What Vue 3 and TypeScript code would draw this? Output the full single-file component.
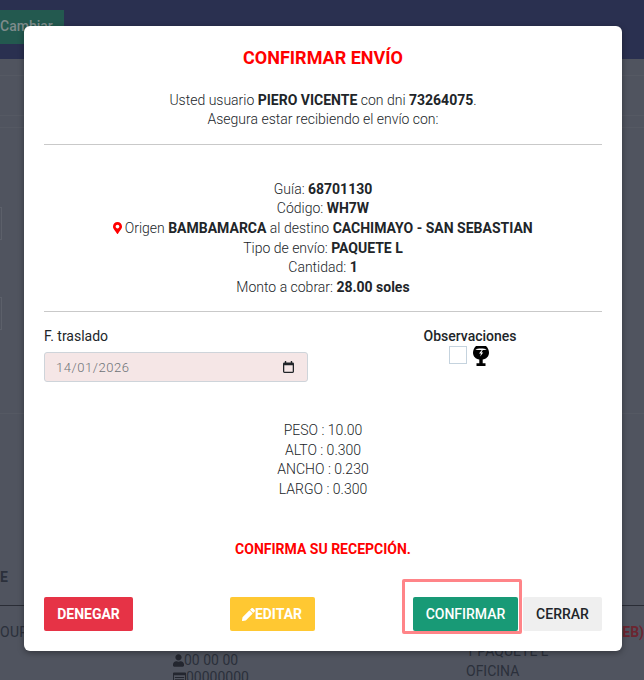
<script setup lang="ts">
const shipment = [
  { label: 'Guía:', value: '68701130' },
  { label: 'Código:', value: 'WH7W' },
];
const details = [
  { label: 'Tipo de envío:', value: 'PAQUETE L' },
  { label: 'Cantidad:', value: '1' },
  { label: 'Monto a cobrar:', value: '28.00 soles' },
];
const sizes = ['PESO : 10.00', 'ALTO : 0.300', 'ANCHO : 0.230', 'LARGO : 0.300'];
</script>

<template>
  <div class="page">
    <header class="topbar"><span class="change">Cambiar</span></header>
    <main class="behind">
      <div class="ghost-lines">
        <span class="ghost-line l1"></span>
        <span class="ghost-line l2"></span>
        <span class="ghost-line l3"></span>
      </div>
      <div class="ghost-input first"></div>
      <div class="ghost-input second"></div>
      <div class="ghost-line l4"></div>
      <div class="ghost-head">E</div>
      <div class="ghost-row">
        <span class="ghost-a">OUR</span>
        <div class="ghost-b">
          <span class="ghost-icon">
            <svg viewBox="0 0 448 512" width="11" height="13"><path d="M224 256c70.7 0 128-57.3 128-128S294.7 0 224 0 96 57.3 96 128s57.3 128 128 128zm89.6 32h-16.7c-22.2 10.2-46.9 16-72.9 16s-50.6-5.8-72.9-16h-16.7C60.2 288 0 348.2 0 422.4V464c0 26.5 21.5 48 48 48h352c26.5 0 48-21.5 48-48v-41.6c0-74.2-60.2-134.4-134.4-134.4z" /></svg>00 00 00
          </span>
          <span class="ghost-icon">
            <svg viewBox="0 0 14 12" width="13" height="12"><path fill-rule="evenodd" d="M1 0h12a1 1 0 0 1 1 1v10a1 1 0 0 1-1 1H1a1 1 0 0 1-1-1V1a1 1 0 0 1 1-1zm0 3v8h12V3zm1 2h10v1H2zm0 2h10v1H2z" /></svg>00000000
          </span>
        </div>
        <div class="ghost-c"><span>1 PAQUETE L</span><span>OFICINA</span></div>
        <strong class="ghost-d">WEB)</strong>
      </div>
    </main>

    <section class="modal">
      <h1 class="title">CONFIRMAR ENVÍO</h1>
      <p class="intro">
        Usted usuario <b>PIERO VICENTE</b> con dni <b>73264075</b>.<br />
        Asegura estar recibiendo el envío con:
      </p>
      <hr class="rule" />
      <div class="summary">
        <div v-for="row in shipment" :key="row.label">{{ row.label }} <b>{{ row.value }}</b></div>
        <div>
          <svg class="pin" viewBox="0 0 384 512" width="9" height="12"><path d="M172.268 501.67C26.97 291.031 0 269.413 0 192 0 85.961 85.961 0 192 0s192 85.961 192 192c0 77.413-26.97 99.031-172.268 309.67-9.535 13.774-29.93 13.773-39.464 0zM192 272c44.183 0 80-35.817 80-80s-35.817-80-80-80-80 35.817-80 80 35.817 80 80 80z" /></svg>
          Origen <b>BAMBAMARCA</b> al destino <b>CACHIMAYO - SAN SEBASTIAN</b>
        </div>
        <div v-for="row in details" :key="row.label">{{ row.label }} <b>{{ row.value }}</b></div>
      </div>
      <hr class="rule lower" />
      <div class="fields">
        <div class="date-field">
          <label class="date-label">F. traslado</label>
          <div class="date-box">
            <span>14/01/2026</span>
            <svg viewBox="0 0 12 13" width="11" height="12"><path fill-rule="evenodd" d="M2 0h1.5v1.500h5V0H10v1.500h.5A1.500 1.500 0 0 1 12 3v8.500a1.500 1.500 0 0 1-1.500 1.500h-9A1.500 1.500 0 0 1 0 11.500V3a1.500 1.500 0 0 1 1.500-1.500H2zM1.400 4.500v7.100h9.200V4.500z" /></svg>
          </div>
        </div>
        <div class="notes">
          <b class="notes-title">Observaciones</b>
          <div class="notes-row">
            <span class="check"></span>
            <svg class="fragile" viewBox="0 0 16 20" width="16" height="20">
              <path d="M3 0h10c2 2 3 4.200 3 6.700 0 3.700-2.800 6.300-6.300 6.700v3.800h2.800V20h-9v-2.800h2.800v-3.800C2.800 13 0 10.400 0 6.700 0 4.200 1 2 3 0z" />
              <path fill="#fff" d="M2.300 3.400C5 2.300 11 2.300 13.700 3.400 11 4.200 5 4.200 2.300 3.400z" />
              <path fill="#fff" d="M8.800 4 6 7.500h2L7.200 10.500l3-4H8.300l1.500-2.500z" />
            </svg>
          </div>
        </div>
      </div>
      <div class="sizes">
        <div v-for="size in sizes" :key="size">{{ size }}</div>
      </div>
      <p class="notice">CONFIRMA SU RECEPCIÓN.</p>
      <footer class="actions">
        <button class="btn deny">DENEGAR</button>
        <button class="btn edit">
          <svg viewBox="0 0 512 512" width="13" height="13"><path d="M497.900 142.100l-46.100 46.100c-4.700 4.700-12.300 4.700-17 0l-111-111c-4.700-4.700-4.700-12.300 0-17l46.100-46.100c18.700-18.700 49.100-18.700 67.900 0l60.100 60.100c18.800 18.700 18.800 49.100 0 67.900zM284.200 99.800L21.600 362.400.4 483.900c-2.900 16.400 11.400 30.600 27.800 27.800l121.500-21.300 262.600-262.600c4.700-4.700 4.700-12.300 0-17l-111-111c-4.800-4.700-12.400-4.700-17.100 0z" /></svg>EDITAR
        </button>
        <div class="end-actions">
          <button class="btn confirm">CONFIRMAR</button>
          <span class="highlight"></span>
          <button class="btn close">CERRAR</button>
        </div>
      </footer>
    </section>
  </div>
</template>

<style>
html,
body {
  margin: 0;
  background: #50545f;
}
</style>

<style scoped>
.page {
  position: relative;
  width: 644px;
  height: 680px;
  overflow: hidden;
  background: #50545f;
  font-family: Roboto, "Liberation Sans", sans-serif;
  font-size: 14px;
  line-height: 19.6px;
  color: #212529;
}
.topbar {
  height: 59px;
  box-sizing: border-box;
  padding-top: 10px;
  background: #2a3050;
}
.change {
  display: block;
  width: 64px;
  height: 34px;
  box-sizing: border-box;
  background: #23594f;
  color: #7d8b8b;
  font-weight: 500;
  line-height: 32px;
  white-space: nowrap;
}
.behind {
  height: 621px;
  box-sizing: border-box;
  color: #2b303b;
}
.ghost-lines {
  height: 148px;
  box-sizing: border-box;
  padding-top: 16px;
  display: flex;
  flex-direction: column;
}
.ghost-line {
  display: block;
  height: 1px;
  background: #555963;
}
.l2 {
  margin-top: 39px;
}
.l3 {
  margin-top: 11px;
}
.ghost-input {
  width: 2px;
  height: 33px;
  border: 1px solid #5c606a;
  border-left: 0;
  box-sizing: border-box;
}
.ghost-input.second {
  margin-top: 57px;
}
.l4 {
  margin-top: 83px;
}
.ghost-head {
  margin-top: 154px;
  height: 37px;
  font-weight: 700;
  border-bottom: 1px solid #2a2d36;
}
.ghost-row {
  display: flex;
  height: 80px;
}
.ghost-a {
  width: 173px;
  padding-top: 17px;
  letter-spacing: 0.3px;
}
.ghost-b {
  width: 293px;
  display: flex;
  flex-direction: column;
  padding-top: 46px;
}
.ghost-icon {
  display: flex;
  align-items: center;
  line-height: 17px;
  fill: #23262f;
}
.ghost-c {
  width: 144px;
  display: flex;
  flex-direction: column;
  padding-top: 36px;
}
.ghost-d {
  padding-top: 17px;
  color: #6c2530;
  white-space: nowrap;
}
.modal {
  position: absolute;
  top: 26px;
  left: 24px;
  width: 598px;
  height: 625px;
  box-sizing: border-box;
  padding: 20px;
  background: #fff;
  border-radius: 6px;
  box-shadow: 0 2px 6px rgba(0, 0, 0, 0.35);
  font-weight: 300;
  text-align: center;
}
b {
  font-weight: 700;
}
.title {
  margin: 0;
  font-size: 18px;
  line-height: 24px;
  font-weight: 700;
  color: #ff0000;
}
.intro {
  margin: 20.5px 0 0;
}
.rule {
  margin: 14.5px 0 0;
  border: 0;
  border-top: 1px solid #c9c9c9;
}
.summary {
  margin-top: 34.6px;
}
.pin {
  fill: #ff0000;
  vertical-align: -1px;
  margin-right: -1px;
}
.rule.lower {
  margin-top: 13.4px;
}
.fields {
  display: flex;
  justify-content: space-between;
  margin-top: 15px;
}
.date-field {
  width: 264px;
  text-align: left;
}
.date-label {
  display: block;
  font-weight: 400;
  margin-bottom: 6px;
}
.date-box {
  display: flex;
  align-items: center;
  justify-content: space-between;
  height: 30px;
  box-sizing: border-box;
  padding: 0 13px 0 11px;
  background: #f5e6e6;
  border: 1px solid #ced4da;
  border-radius: 3px;
  color: #6d7276;
  font-size: 13px;
  letter-spacing: 0.55px;
}
.date-box svg {
  fill: #212529;
}
.notes {
  width: 180px;
  margin-right: 42px;
  display: flex;
  flex-direction: column;
  align-items: center;
}
.notes-title {
  font-weight: 500;
}
.notes-row {
  display: flex;
  align-items: flex-start;
  gap: 6px;
  margin-right: 3px;
  height: 20px;
}
.check {
  width: 18px;
  height: 18px;
  box-sizing: border-box;
  border: 1px solid #c5d3de;
  background: #fff;
}
.fragile {
  fill: #000;
}
.sizes {
  margin-top: 38.7px;
}
.notice {
  margin: 40.3px 0 0;
  font-size: 14px;
  font-weight: 700;
  color: #ff0000;
}
.actions {
  display: flex;
  justify-content: space-between;
  align-items: flex-start;
  margin-top: 38px;
}
.btn {
  height: 34px;
  border: 0;
  border-radius: 2px;
  font-family: inherit;
  font-size: 14px;
  font-weight: 700;
  padding: 0;
  display: flex;
  align-items: center;
  justify-content: center;
}
.deny {
  width: 89px;
  background: #e63346;
  color: #fff;
}
.edit {
  width: 85px;
  background: #ffc832;
  color: #fff;
  fill: #fff;
  margin-right: 2px;
}
.end-actions {
  position: relative;
  display: flex;
  gap: 5px;
}
.confirm {
  width: 105px;
  background: #189a76;
  color: #fff;
  font-weight: 500;
}
.close {
  width: 79px;
  background: #efefef;
  color: #212529;
  font-weight: 500;
}
.highlight {
  position: absolute;
  left: -11px;
  top: -18px;
  width: 120px;
  height: 55px;
  box-sizing: border-box;
  border: 3px solid #ff8488;
  border-radius: 2px;
  pointer-events: none;
}
</style>
